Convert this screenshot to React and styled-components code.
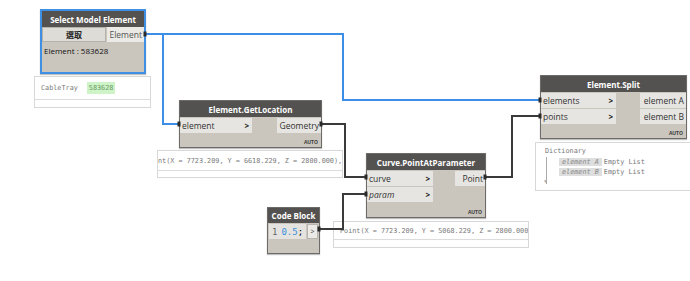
import React from "react";
import styled, { createGlobalStyle } from "styled-components";

const Global = createGlobalStyle`
  body {
    margin: 0;
    background: #fff;
    font-family: "Open Sans", "Noto Sans", sans-serif;
  }
`;

const Canvas = styled.div`
  position: relative;
  width: 690px;
  height: 281px;
  overflow: hidden;
  background: #fff;
`;

const Node = styled.div`
  position: absolute;
  left: ${(p) => p.$x}px;
  top: ${(p) => p.$y}px;
  width: ${(p) => p.$w}px;
  height: ${(p) => p.$h}px;
  box-sizing: border-box;
  background: #cac6be;
  border: ${(p) => (p.$selected ? "2px solid #3f8fe4" : "1px solid #6d6b68")};
  box-shadow: 0 1px 1px rgba(0, 0, 0, 0.25);
  display: flex;
  flex-direction: column;
`;

const Header = styled.div`
  height: ${(p) => p.$h || 16}px;
  flex-shrink: 0;
  background: #545250;
  color: #fff;
  font-weight: 700;
  font-size: 8px;
  display: flex;
  align-items: center;
  justify-content: center;
  white-space: nowrap;
`;

const Ports = styled.div`
  display: grid;
  grid-template-columns: ${(p) => p.$left}px 1fr ${(p) => p.$right}px;
  grid-auto-rows: 15px;
  row-gap: 1px;
  padding-top: 1px;
`;

const InPort = styled.div`
  background: #e6e5e1;
  display: flex;
  align-items: center;
  justify-content: space-between;
  padding: 0 3px 0 2px;
  font-size: 8.5px;
  color: #333;
  font-style: ${(p) => (p.$italic ? "italic" : "normal")};
`;

const Chevron = styled.span`
  font-weight: 700;
  font-size: 8px;
  color: #222;
  font-style: normal;
`;

const OutPort = styled.div`
  background: #e6e5e1;
  display: flex;
  align-items: center;
  justify-content: flex-end;
  padding-right: 2px;
  font-size: 8.5px;
  color: #333;
`;

const Empty = styled.div``;

const Footer = styled.div`
  flex: 1;
  display: flex;
  align-items: flex-end;
  justify-content: flex-end;
  padding: 0 3px 2px 0;
  font-size: 5px;
  font-weight: 700;
  color: #3a3a3a;
`;

const SelectRow = styled.div`
  display: flex;
  height: 15px;
  gap: 1px;
`;

const SelectButton = styled.div`
  width: 64px;
  background: #dedcd7;
  border: 1px solid #b5b2ab;
  box-sizing: border-box;
  display: flex;
  align-items: center;
  justify-content: center;
  font-size: 8px;
  color: #222;
  font-family: "Noto Sans CJK TC", "Open Sans", sans-serif;
  font-weight: 700;
`;

const SelectOut = styled(OutPort)`
  flex: 1;
  background: #ebeae6;
  color: #555;
`;

const SelectInfo = styled.div`
  padding: 3px 2px 0;
  font-size: 8px;
  color: #111;
`;

const CodeRow = styled.div`
  display: flex;
  height: 15px;
  margin-top: 1px;
  gap: 1px;
  padding: 0 1px;
`;

const CodeLine = styled.div`
  flex: 1;
  background: #e4e3e0;
  display: flex;
  align-items: center;
  font-family: "DejaVu Sans Mono", monospace;
  font-size: 9px;
  padding-left: 3px;
  gap: 4px;
`;

const LineNo = styled.span`
  color: #666;
`;

const Num = styled.span`
  color: #3e8fdc;
`;

const CodeOut = styled.div`
  width: 11px;
  background: #ebeae6;
  border: 1px solid #b8b5ae;
  box-sizing: border-box;
  display: flex;
  align-items: center;
  justify-content: center;
  font-size: 7px;
  color: #333;
`;

const Preview = styled.div`
  position: absolute;
  left: ${(p) => p.$x}px;
  top: ${(p) => p.$y}px;
  width: ${(p) => p.$w}px;
  height: ${(p) => p.$h}px;
  box-sizing: border-box;
  background: #fff;
  border: 1px solid #d8d8d8;
  font-family: "DejaVu Sans Mono", monospace;
  font-size: 6.8px;
  color: #777;
  display: flex;
  flex-direction: column;
  overflow: hidden;
`;

const PreviewLine = styled.div`
  height: ${(p) => p.$h}px;
  flex-shrink: 0;
  border-bottom: 1px solid #dcdcdc;
  display: flex;
  align-items: center;
  gap: 9px;
  padding-left: ${(p) => p.$pad}px;
  white-space: nowrap;
`;

const Highlight = styled.span`
  background: #cdf3c6;
  color: #6a9a68;
  padding: 2px 2px;
`;

const Dict = styled.div`
  padding: 3px 0 0 9px;
  line-height: 10.5px;
  white-space: nowrap;
`;

const DictItems = styled.div`
  position: relative;
  padding-left: 12px;
  border-left: 1px solid #aaa;
  margin-left: 1px;
  padding-bottom: 6px;
`;

const Key = styled.span`
  background: #dedede;
  color: #888;
  font-style: italic;
  padding: 0 3px;
  margin-right: 2px;
`;

const Arrow = styled.span`
  position: absolute;
  left: -3px;
  bottom: -3px;
  font-size: 5px;
  color: #aaa;
`;

const Wires = styled.svg`
  position: absolute;
  left: 0;
  top: 0;
  pointer-events: none;
`;

function DynNode({ x, y, w, h, title, left, right, inputs, outputs }) {
  const rows = Math.max(inputs.length, outputs.length);
  return (
    <Node $x={x} $y={y} $w={w} $h={h}>
      <Header>{title}</Header>
      <Ports $left={left} $right={right}>
        {Array.from({ length: rows }).map((_, i) => (
          <React.Fragment key={i}>
            {inputs[i] ? (
              <InPort $italic={inputs[i].italic}>
                {inputs[i].name}
                <Chevron>&gt;</Chevron>
              </InPort>
            ) : (
              <Empty />
            )}
            <Empty />
            {outputs[i] ? <OutPort>{outputs[i]}</OutPort> : <Empty />}
          </React.Fragment>
        ))}
      </Ports>
      <Footer>AUTO</Footer>
    </Node>
  );
}

export default function App() {
  const nubs = [
    [145, 34],
    [179, 124],
    [321, 124],
    [366, 177],
    [366, 194],
    [485, 177],
    [319, 229],
    [540, 100],
    [540, 116],
  ];
  return (
    <Canvas>
      <Global />

      <Node $x={40} $y={9} $w={106} $h={65} $selected>
        <Header $h={16}>Select Model Element</Header>
        <SelectRow>
          <SelectButton>選取</SelectButton>
          <SelectOut>Element</SelectOut>
        </SelectRow>
        <SelectInfo>Element : 583628</SelectInfo>
      </Node>

      <Preview $x={34} $y={76} $w={117} $h={32}>
        <PreviewLine $h={22} $pad={6}>
          CableTray <Highlight>583628</Highlight>
        </PreviewLine>
      </Preview>

      <DynNode
        x={179}
        y={100}
        w={143}
        h={48}
        title="Element.GetLocation"
        left={72}
        right={44}
        inputs={[{ name: "element" }]}
        outputs={["Geometry"]}
      />

      <Preview $x={157} $y={150} $w={186} $h={28}>
        <PreviewLine $h={19} $pad={0}>
          nt(X = 7723.209, Y = 6618.229, Z = 2800.000),
        </PreviewLine>
      </Preview>

      <DynNode
        x={366}
        y={153}
        w={120}
        h={65}
        title="Curve.PointAtParameter"
        left={66}
        right={30}
        inputs={[{ name: "curve" }, { name: "param", italic: true }]}
        outputs={["Point"]}
      />

      <DynNode
        x={540}
        y={75}
        w={147}
        h={64}
        title="Element.Split"
        left={75}
        right={46}
        inputs={[{ name: "elements" }, { name: "points" }]}
        outputs={["element A", "element B"]}
      />

      <Preview $x={535} $y={142} $w={170} $h={49}>
        <Dict>
          Dictionary
          <DictItems>
            <div>
              <Key>element A</Key>Empty List
            </div>
            <div>
              <Key>element B</Key>Empty List
            </div>
            <Arrow>▼</Arrow>
          </DictItems>
        </Dict>
      </Preview>

      <Node $x={267} $y={207} $w={53} $h={47}>
        <Header $h={15}>Code Block</Header>
        <CodeRow>
          <CodeLine>
            <LineNo>1</LineNo>
            <span>
              <Num>0.5</Num>;
            </span>
          </CodeLine>
          <CodeOut>&gt;</CodeOut>
        </CodeRow>
      </Node>

      <Preview $x={333} $y={221} $w={196} $h={27}>
        <PreviewLine $h={17} $pad={6}>
          Point(X = 7723.209, Y = 5068.229, Z = 2800.000)
        </PreviewLine>
      </Preview>

      <Wires width="690" height="281">
        <g fill="none" strokeWidth="2">
          <path d="M146 34 H343 V100 H540" stroke="#3d8ee6" />
          <path d="M163 34 V124 H179" stroke="#3d8ee6" />
          <path d="M322 124 H345 V177 H366" stroke="#3a3a3a" />
          <path d="M320 229 H343 V194 H366" stroke="#3a3a3a" />
          <path d="M486 177 H512 V116 H540" stroke="#3a3a3a" />
        </g>
        {nubs.map(([x, y], i) => (
          <rect key={i} x={x - 1.5} y={y - 2.5} width="3" height="5" fill="#2a2a2a" />
        ))}
      </Wires>
    </Canvas>
  );
}
